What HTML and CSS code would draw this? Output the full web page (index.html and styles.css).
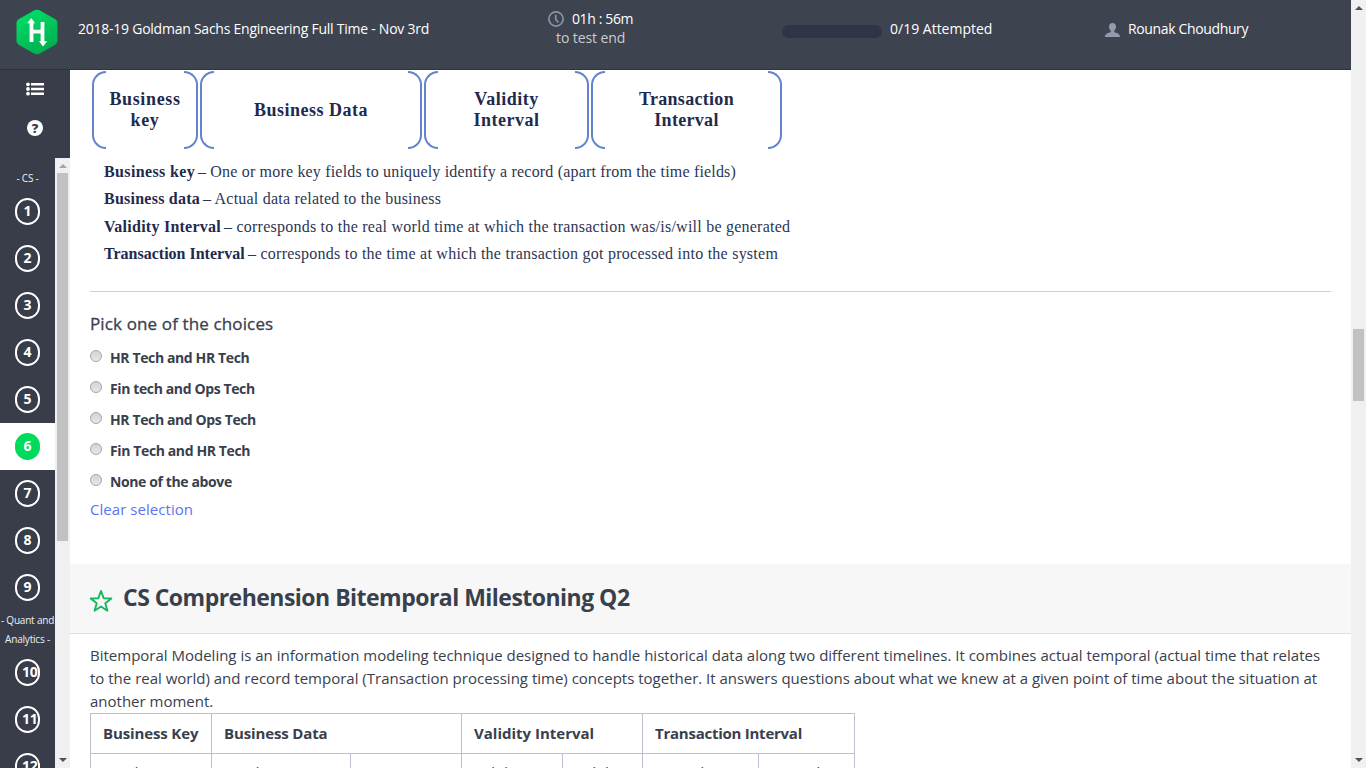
FILE: index.html
```
<!DOCTYPE html>
<html lang="en">
<head>
<meta charset="utf-8">
<title>2018-19 Goldman Sachs Engineering Full Time - Nov 3rd</title>
<link rel="stylesheet" href="styles.css">
</head>
<body>
<div class="window">
  <div class="app">
    <header class="topbar">
      <svg class="logo" width="42" height="46" viewBox="0 0 42 46">
        <defs><linearGradient id="g" x1="0" y1="0" x2="0.5" y2="1"><stop offset="0" stop-color="#00e66a"/><stop offset="1" stop-color="#00b050"/></linearGradient></defs>
        <path d="M18.500 1.300Q21 0 23.500 1.300L39 10Q41.500 11.500 41.500 14V32Q41.500 34.500 39 36L23.500 44.700Q21 46 18.500 44.700L3 36Q.5 34.500 .5 32V14Q.5 11.500 3 10Z" fill="url(#g)"/>
        <path d="M3 12 38 36M12 6 41 24M2 25 28 42" stroke="#00a94e" stroke-opacity=".25" fill="none"/>
        <path d="M15.500 33V14M26.500 13V33M15.500 22.700H26.500" stroke="#fff" stroke-width="3.800" fill="none"/>
        <path d="M11.200 14.300 15.300 9 19 14.300ZM23 32.200H31.200L27 37.500Z" fill="#fff"/>
      </svg>
      <div class="test-name">2018-19 Goldman Sachs Engineering Full Time - Nov 3rd</div>
      <div class="timer">
        <div class="time">
          <svg width="16" height="16" viewBox="0 0 16 16" fill="none" stroke="#8d92a6" stroke-width="1.700"><circle cx="8" cy="8" r="7.100"/><path d="M7.700 3.800V8.500L10.300 11.300"/></svg>
          <span>01h : 56m</span>
        </div>
        <div class="to-end">to test end</div>
      </div>
      <div class="progress"></div>
      <div class="attempted">0/19 Attempted</div>
      <svg class="user-icon" width="15" height="14" viewBox="0 0 15 14"><path d="M7.500 0C9.600 0 11 1.300 11 3.400 11 5.200 10.400 6.600 9.300 7.600V9.300C12.500 10.200 15 11 15 14H0C0 11 2.500 10.200 5.700 9.300V7.600C4.600 6.600 4 5.200 4 3.400 4 1.300 5.400 0 7.500 0Z" fill="#9499af"/></svg>
      <div class="user">Rounak Choudhury</div>
    </header>
    <div class="body">
      <aside class="sidebar">
        <div class="tools">
          <svg width="18" height="14" viewBox="0 0 18 14" fill="#fff"><path d="M5 1H18V3.600H5ZM5 5.700H18V8.300H5ZM5 10.400H18V13H5Z"/><circle cx="2" cy="2.300" r="1.900"/><circle cx="2" cy="7" r="1.900"/><circle cx="2" cy="11.700" r="1.900"/></svg>
          <div class="help">?</div>
        </div>
        <div class="nav-wrap">
          <nav class="nav">
            <div class="group">- CS -</div>
            <div class="item"><span>1</span></div>
            <div class="item"><span>2</span></div>
            <div class="item"><span>3</span></div>
            <div class="item"><span>4</span></div>
            <div class="item"><span>5</span></div>
            <div class="item active"><span>6</span></div>
            <div class="item"><span>7</span></div>
            <div class="item"><span>8</span></div>
            <div class="item"><span>9</span></div>
            <div class="group">- Quant and<br>Analytics -</div>
            <div class="item wide"><span>10</span></div>
            <div class="item wide"><span>11</span></div>
            <div class="item wide"><span>12</span></div>
          </nav>
          <div class="scroll nav-scroll"><i class="up dim"></i><b></b><i class="down"></i></div>
        </div>
      </aside>
      <main class="main">
        <section class="question">
          <div class="diagram">
            <div class="box key"><span>Business<br>key</span></div>
            <div class="box data"><span>Business Data</span></div>
            <div class="box validity"><span>Validity<br>Interval</span></div>
            <div class="box trans"><span>Transaction<br>Interval</span></div>
          </div>
          <div class="legend">
            <p><b class="l1">Business key</b><span class="r1">– One or more key fields to uniquely identify a record (apart from the time fields)</span></p>
            <p><b class="l2">Business data</b><span class="r2">– Actual data related to the business</span></p>
            <p><b class="l3">Validity Interval</b><span class="r3">– corresponds to the real world time at which the transaction was/is/will be generated</span></p>
            <p><b class="l4">Transaction Interval</b><span class="r4">– corresponds to the time at which the transaction got processed into the system</span></p>
          </div>
          <h3 class="pick">Pick one of the choices</h3>
          <div class="choices">
            <div class="choice"><i></i><span>HR Tech and HR Tech</span></div>
            <div class="choice"><i></i><span>Fin tech and Ops Tech</span></div>
            <div class="choice"><i></i><span>HR Tech and Ops Tech</span></div>
            <div class="choice"><i></i><span>Fin Tech and HR Tech</span></div>
            <div class="choice"><i></i><span>None of the above</span></div>
          </div>
          <a class="clear">Clear selection</a>
        </section>
        <div class="q-title">
          <svg width="24" height="24" viewBox="0 0 24 24" fill="none" stroke="#16b65a" stroke-width="1.900" stroke-linejoin="round"><path d="M12 2 14.700 9.200 22.300 9.500 16.300 14.200 18.400 21.700 12 17.500 5.600 21.700 7.700 14.200 1.700 9.500 9.300 9.200Z"/></svg>
          <h2>CS Comprehension Bitemporal Milestoning Q2</h2>
        </div>
        <section class="detail">
          <p>Bitemporal Modeling is an information modeling technique designed to handle historical data along two different timelines. It combines actual temporal (actual time that relates<br>to the real world) and record temporal (Transaction processing time) concepts together. It answers questions about what we knew at a given point of time about the situation at<br>another moment.</p>
          <table>
            <colgroup><col class="c1"><col class="c2"><col class="c3"><col class="c4"><col class="c5"><col class="c6"><col class="c7"></colgroup>
            <tr><th>Business Key</th><th colspan="2" class="h2">Business Data</th><th colspan="2" class="h3">Validity Interval</th><th colspan="2" class="h4">Transaction Interval</th></tr>
            <tr><td>Fund</td><td>Fund</td><td></td><td>Validity</td><td>Validity</td><td>Record</td><td>Record</td></tr>
          </table>
        </section>
      </main>
    </div>
  </div>
  <div class="scroll page-scroll"><i class="up"></i><b></b><i class="down"></i></div>
</div>
</body>
</html>
```
FILE: styles.css
```
*, *::before, *::after { box-sizing: border-box; }
body { margin: 0; font-family: "Open Sans", "Noto Sans", sans-serif; color: #39404d; overflow: hidden; }
h2, h3, p { margin: 0; }
.window { display: flex; width: 1366px; height: 768px; overflow: hidden; }
.app { width: 1351px; display: flex; flex-direction: column; }

.topbar { flex: none; height: 70px; display: flex; align-items: flex-start; background: #3e4350; border-bottom: 1px solid #2e323f; color: #fff; font-size: 14px; line-height: 19px; white-space: nowrap; }
.logo { margin: 9px 0 0 16px; }
.test-name { margin: 19px 0 0 20px; width: 470px; letter-spacing: -.245px; }
.timer { width: 234px; margin-top: 9px; }
.time { display: flex; align-items: center; height: 19px; gap: 8px; letter-spacing: -.38px; }
.time svg { margin-top: 1px; }
.to-end { padding-left: 8px; color: #c9cbd1; letter-spacing: -.1px; }
.progress { width: 100px; height: 13px; margin-top: 25px; border-radius: 7px; background: #2f3447; }
.attempted { margin: 19px 0 0 8px; width: 215px; }
.user-icon { margin-top: 23px; }
.user { margin: 19px 0 0 8px; letter-spacing: -.36px; }

.body { flex: 1; display: flex; min-height: 0; }
.sidebar { width: 70px; background: #393d4a; display: flex; flex-direction: column; color: #fff; }
.tools { flex: none; height: 88px; display: flex; flex-direction: column; align-items: center; padding-top: 12px; gap: 24px; }
.help { width: 16px; height: 16px; border-radius: 50%; background: #fff; color: #393d4a; font-weight: 800; font-size: 13px; line-height: 16px; text-align: center; }
.nav-wrap { flex: 1; min-height: 0; display: flex; }
.nav { width: 55px; padding-top: 11px; overflow: hidden; }
.group { font-size: 10px; line-height: 19px; text-align: center; white-space: nowrap; letter-spacing: -.2px; color: #eef0f2; }
.item { height: 47px; padding: 10px 0 0 15px; }
.item span { display: block; width: 25px; height: 27px; border: 2px solid #fff; border-radius: 13px; font-size: 14px; font-weight: 700; line-height: 22px; text-align: center; }
.item.wide span { padding-left: 5px; letter-spacing: -.3px; text-align: left; }
.item.active { background: #fff; }
.item.active span { background: #00db5c; border-color: #00db5c; }

.scroll { width: 15px; background: #f0f0f0; display: flex; flex-direction: column; align-items: center; }
.scroll b { width: 11px; background: #c1c1c1; }
.scroll i { border: 4px solid transparent; border-top-width: 0; border-bottom: 4px solid #505050; }
.scroll i.dim { border-bottom-color: #a3a3a3; }
.scroll i.down { border-top: 4px solid #505050; border-bottom-width: 0; margin-top: auto; }
.nav-scroll .up { margin: 6px 0 5px; }
.nav-scroll b { height: 368px; }
.nav-scroll .down { margin-bottom: 6px; }
.page-scroll .up { margin-top: 6px; }
.page-scroll b { height: 72px; margin-top: 319px; }
.page-scroll .down { margin-bottom: 6px; }

.main { flex: 1; background: #fff; min-width: 0; display: flex; flex-direction: column; overflow: hidden; }
.question { flex: none; height: 494px; padding: 1px 20px 0; }
.diagram { display: flex; gap: 2px; margin-left: 2px; height: 78px; font: 700 18px/21px "Liberation Serif", serif; color: #1f2a4d; }
.box { position: relative; display: flex; align-items: center; justify-content: center; text-align: center; letter-spacing: .5px; }
.box::before, .box::after { content: ""; position: absolute; top: 0; height: 78px; width: 14px; border: 2px solid #6184cc; }
.box::before { left: 0; border-right: 0; border-radius: 14px 0 0 14px; }
.box::after { right: 0; border-left: 0; border-radius: 0 14px 14px 0; }
.key { width: 106px; letter-spacing: .65px; }
.data { width: 222px; }
.validity { width: 165px; }
.trans { width: 191px; letter-spacing: .3px; }
.legend { margin: 9px 0 0 14px; height: 133px; font: 16px/27.300px "Liberation Serif", serif; color: #2c3653; }
.legend p { display: flex; gap: 3px; white-space: nowrap; }
.legend b { color: #1f2a4d; }
.l1 { width: 91px; letter-spacing: .36px; }
.l2 { width: 96px; letter-spacing: .24px; }
.l3 { width: 117px; letter-spacing: .25px; }
.l4 { width: 141px; }
.r1 { letter-spacing: .182px; }
.r2 { letter-spacing: .216px; }
.r3 { letter-spacing: .235px; }
.r4 { letter-spacing: .244px; }
.pick { border-top: 1px solid #ccced1; padding-top: 20px; font-size: 17px; line-height: 24px; font-weight: 500; letter-spacing: .13px; -webkit-text-stroke: .3px #39404d; }
.choices { padding-top: 6px; }
.choice { display: flex; height: 31px; gap: 8px; padding-top: 6px; font-size: 14px; line-height: 20px; font-weight: 700; letter-spacing: -.38px; }
.choice i { width: 12px; height: 12px; border: 1px solid #a5a5a5; border-radius: 50%; background: linear-gradient(#d3d3d3, #e8e8e8); margin-top: 2px; }
.clear { display: block; font-size: 15px; line-height: 22px; color: #5c74f2; margin-top: 1px; letter-spacing: .05px; }

.q-title { flex: none; height: 70px; background: #f7f7f7; border-bottom: 1px solid #dddee0; padding: 0 19px; display: flex; gap: 10px; }
.q-title svg { margin-top: 25px; }
.q-title h2 { font-size: 23px; line-height: 66px; letter-spacing: -.52px; }
.detail { padding: 10px 20px 0; font-size: 15px; line-height: 23px; white-space: nowrap; }
table { border-collapse: collapse; table-layout: fixed; width: 765px; }
.c1 { width: 121px; } .c2 { width: 139px; } .c3 { width: 111px; } .c4 { width: 101px; } .c5 { width: 80px; } .c6 { width: 116px; } .c7 { width: 96px; }
th, td { border: 1px solid #bfc0cd; height: 40px; padding: 0 12px; text-align: left; line-height: 23px; }
th { letter-spacing: -.13px; }
.h3 { letter-spacing: 0; }
.h4 { letter-spacing: -.25px; }
td { height: 60px; padding-top: 7px; vertical-align: top; }
```
